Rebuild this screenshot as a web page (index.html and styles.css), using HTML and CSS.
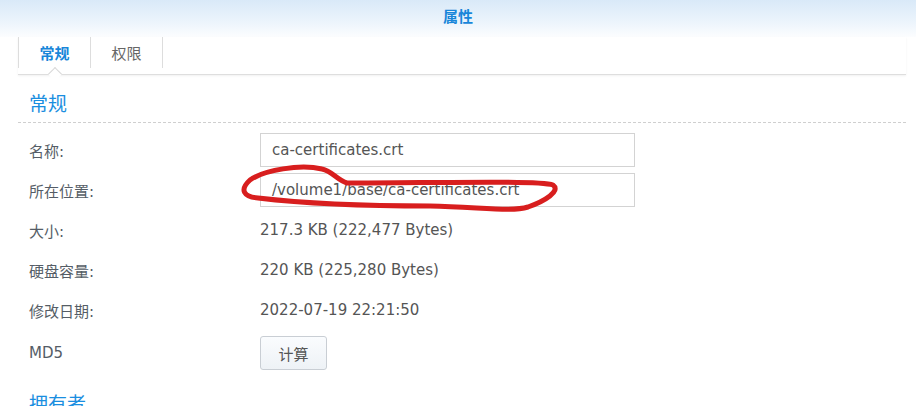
FILE: index.html
```html
<!DOCTYPE html>
<html lang="zh-CN">
<head>
<meta charset="utf-8">
<title>属性</title>
<link rel="stylesheet" href="styles.css">
</head>
<body>
<div class="dialog">
  <header class="title-bar">属性</header>
  <div class="content">
    <nav class="tabs">
      <div class="tab active">常规</div>
      <div class="tab">权限</div>
    </nav>
    <section class="section">
      <h2 class="section-title">常规</h2>
      <div class="form">
        <div class="row">
          <div class="label">名称:</div>
          <div class="field"><div class="input">ca-certificates.crt</div></div>
        </div>
        <div class="row">
          <div class="label">所在位置:</div>
          <div class="field"><div class="input">/volume1/base/ca-certificates.crt</div></div>
        </div>
        <div class="row">
          <div class="label">大小:</div>
          <div class="field value">217.3 KB (222,477 Bytes)</div>
        </div>
        <div class="row">
          <div class="label">硬盘容量:</div>
          <div class="field value">220 KB (225,280 Bytes)</div>
        </div>
        <div class="row">
          <div class="label">修改日期:</div>
          <div class="field value">2022-07-19 22:21:50</div>
        </div>
        <div class="row row-button">
          <div class="label">MD5</div>
          <div class="field"><button class="btn" type="button">计算</button></div>
        </div>
      </div>
    </section>
    <section class="section">
      <h2 class="section-title plain">拥有者</h2>
    </section>
  </div>
  <svg class="annotation" width="916" height="406" viewBox="0 0 916 406" aria-hidden="true">
    <path d="M 322 169 C 300 164, 264 170, 250 180 C 239 190, 244 197, 258 198 C 300 203, 360 206, 430 206 C 480 207, 512 212, 528 207 C 545 201, 561 191, 553 185 C 540 180, 430 183, 347 183 C 337 180, 332 171, 322 169 Z" fill="none" stroke="#d81e1e" stroke-width="5" stroke-linecap="round" stroke-linejoin="round"/>
  </svg>
</div>
</body>
</html>
```

FILE: styles.css
```css
html, body {
  margin: 0;
  padding: 0;
  background: #ffffff;
}

body {
  width: 916px;
  height: 406px;
  overflow: hidden;
  font-family: "DejaVu Sans", "Noto Sans CJK SC", sans-serif;
  color: #555555;
}

.dialog {
  position: relative;
  width: 916px;
  height: 406px;
  overflow: hidden;
}

.title-bar {
  height: 34px;
  line-height: 32px;
  text-align: center;
  font-family: "Noto Sans CJK SC", sans-serif;
  font-size: 15px;
  font-weight: 700;
  color: #1886d9;
  background: linear-gradient(to bottom, #d9e9f8 0px, #ecf4fc 22px, #ffffff 40px);
  padding-bottom: 3px;
}

.content {
  padding: 0 10px 0 18px;
}

.tabs {
  display: flex;
  height: 37px;
  border-bottom: 1px solid #dedede;
  box-shadow: 0 1px 2px rgba(0, 0, 0, 0.06);
  background: #ffffff;
}

.tab {
  position: relative;
  width: 71px;
  height: 31px;
  line-height: 32px;
  text-align: center;
  font-family: "Noto Sans CJK SC", sans-serif;
  font-size: 15px;
  color: #666666;
  border-right: 1px solid #dddddd;
}

.tab:first-child {
  border-left: 1px solid #dddddd;
}

.tab.active {
  color: #1886d9;
  font-weight: 700;
}

.tab.active::after {
  content: "";
  position: absolute;
  left: 31px;
  bottom: -11px;
  width: 9px;
  height: 9px;
  background: #ffffff;
  border-top: 1px solid #d8d8d8;
  border-left: 1px solid #d8d8d8;
  transform: rotate(45deg);
}

.section-title {
  margin: 0;
  padding: 15px 0 6px 11px;
  font-family: "Noto Sans CJK SC", sans-serif;
  font-size: 19px;
  font-weight: 400;
  line-height: 26px;
  color: #1a8ee0;
  border-bottom: 1px dashed #cfcfcf;
}

.section-title.plain {
  border-bottom: none;
  padding-top: 20px;
}

.form {
  display: flex;
  flex-direction: column;
  gap: 6px;
  padding: 10px 0 0 11px;
}

.row {
  display: flex;
  align-items: center;
  height: 34px;
}

.row-button {
  margin-top: 3px;
}

.label {
  width: 231px;
  font-size: 15px;
  color: #555d66;
}

.field {
  flex: 0 0 375px;
}

.value {
  font-size: 15px;
  color: #555555;
}

.input {
  box-sizing: border-box;
  height: 34px;
  line-height: 32px;
  padding: 0 11px;
  border: 1px solid #d3d3d3;
  font-size: 15px;
  color: #555555;
  background: #ffffff;
}

.btn {
  box-sizing: border-box;
  width: 67px;
  height: 34px;
  border: 1px solid #c9ced4;
  border-radius: 3px;
  background: linear-gradient(to bottom, #fafcfe, #eef2f6);
  font-family: "Noto Sans CJK SC", sans-serif;
  font-size: 15px;
  color: #555555;
  padding: 0;
}

.annotation {
  position: absolute;
  left: 0;
  top: 0;
  pointer-events: none;
}
```
